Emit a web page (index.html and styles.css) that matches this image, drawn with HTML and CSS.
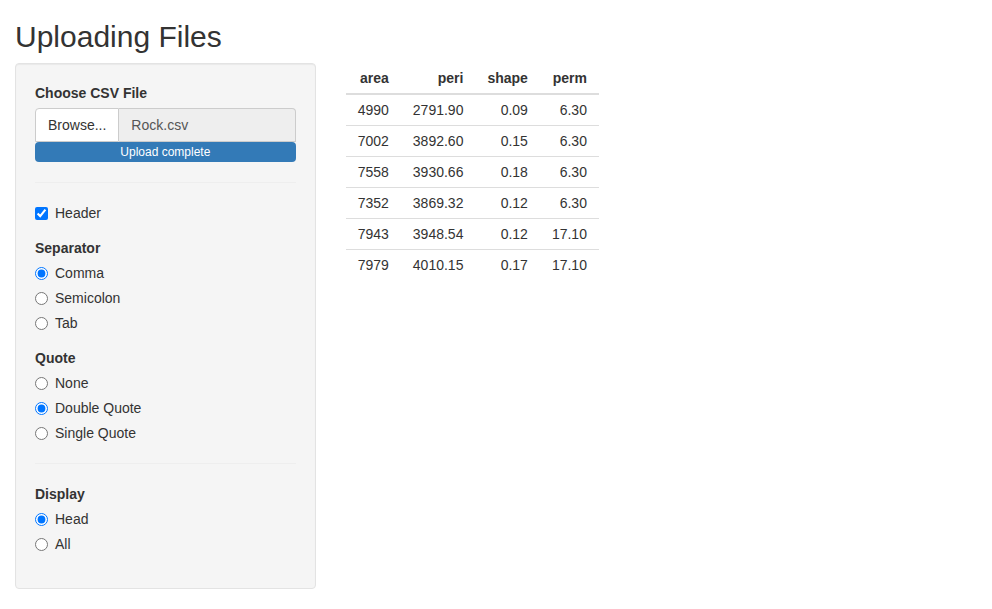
FILE: index.html
```html
<!DOCTYPE html>
<html>
<head>
<meta charset="utf-8">
<title>Uploading Files</title>
<link rel="stylesheet" href="styles.css">
</head>
<body>
<div class="container">
  <h2 class="title">Uploading Files</h2>
  <div class="row">
    <div class="col-side">
      <div class="well">
        <div class="form-group">
          <label class="control-label">Choose CSV File</label>
          <div class="input-group">
            <span class="btn">Browse...</span>
            <span class="file-name">Rock.csv</span>
          </div>
          <div class="progress"><div class="progress-bar">Upload complete</div></div>
        </div>
        <hr>
        <div class="form-group">
          <label class="option"><input type="checkbox" checked><span>Header</span></label>
        </div>
        <div class="form-group">
          <label class="control-label">Separator</label>
          <label class="option"><input type="radio" name="sep" checked><span>Comma</span></label>
          <label class="option"><input type="radio" name="sep"><span>Semicolon</span></label>
          <label class="option"><input type="radio" name="sep"><span>Tab</span></label>
        </div>
        <div class="form-group">
          <label class="control-label">Quote</label>
          <label class="option"><input type="radio" name="quote"><span>None</span></label>
          <label class="option"><input type="radio" name="quote" checked><span>Double Quote</span></label>
          <label class="option"><input type="radio" name="quote"><span>Single Quote</span></label>
        </div>
        <hr>
        <div class="form-group">
          <label class="control-label">Display</label>
          <label class="option"><input type="radio" name="disp" checked><span>Head</span></label>
          <label class="option"><input type="radio" name="disp"><span>All</span></label>
        </div>
      </div>
    </div>
    <div class="col-main">
      <table class="data-table">
        <thead>
          <tr><th>area</th><th>peri</th><th>shape</th><th>perm</th></tr>
        </thead>
        <tbody>
          <tr><td>4990</td><td>2791.90</td><td>0.09</td><td>6.30</td></tr>
          <tr><td>7002</td><td>3892.60</td><td>0.15</td><td>6.30</td></tr>
          <tr><td>7558</td><td>3930.66</td><td>0.18</td><td>6.30</td></tr>
          <tr><td>7352</td><td>3869.32</td><td>0.12</td><td>6.30</td></tr>
          <tr><td>7943</td><td>3948.54</td><td>0.12</td><td>17.10</td></tr>
          <tr><td>7979</td><td>4010.15</td><td>0.17</td><td>17.10</td></tr>
        </tbody>
      </table>
    </div>
  </div>
</div>
</body>
</html>
```
FILE: styles.css
```css
* { box-sizing: border-box; }
html, body { margin: 0; padding: 0; background: #fff; }
body {
  font-family: "Liberation Sans", Arial, Helvetica, sans-serif;
  font-size: 14px;
  line-height: 20px;
  color: #333;
}
.container { padding: 0 15px; }
.title {
  font-size: 30px;
  font-weight: 500;
  line-height: 33px;
  margin: 20px 0 10px;
}
.row { display: flex; margin: 0 -15px; }
.col-side { width: 33.3333%; padding: 0 15px; }
.col-main { width: 66.6667%; padding: 0 15px; }
.well {
  background: #f5f5f5;
  border: 1px solid #e3e3e3;
  border-radius: 4px;
  box-shadow: inset 0 1px 1px rgba(0,0,0,.05);
  padding: 19px;
  margin-bottom: 20px;
}
.form-group { margin-bottom: 15px; }
.control-label {
  display: block;
  font-weight: bold;
  margin-bottom: 5px;
}
.input-group {
  display: flex;
  height: 34px;
}
.btn {
  background: #fff;
  border: 1px solid #ccc;
  border-radius: 4px 0 0 0;
  padding: 6px 12px;
  color: #333;
  white-space: nowrap;
}
.file-name {
  flex: 1;
  background: #eee;
  border: 1px solid #ccc;
  border-left: 0;
  border-radius: 0 4px 0 0;
  padding: 6px 12px;
  color: #555;
}
.progress {
  height: 20px;
  background: #f5f5f5;
  border-radius: 4px;
  overflow: hidden;
}
.progress-bar {
  height: 20px;
  width: 100%;
  background: #337ab7;
  color: #fff;
  font-size: 12px;
  line-height: 20px;
  text-align: center;
}
hr {
  border: 0;
  border-top: 1px solid #eee;
  margin: 20px 0;
  height: 0;
}
.option {
  display: flex;
  align-items: center;
  gap: 7px;
  margin-bottom: 5px;
  cursor: pointer;
}
.option:last-child { margin-bottom: 0; }
.option input {
  margin: 0;
  width: 13px;
  height: 13px;
}
.data-table {
  border-collapse: collapse;
  margin-bottom: 20px;
}
.data-table th, .data-table td {
  padding: 5px 12px;
  text-align: right;
  line-height: 20px;
}
.data-table th {
  font-weight: bold;
  border-bottom: 2px solid #ddd;
}
.data-table td { border-top: 1px solid #ddd; }
```
